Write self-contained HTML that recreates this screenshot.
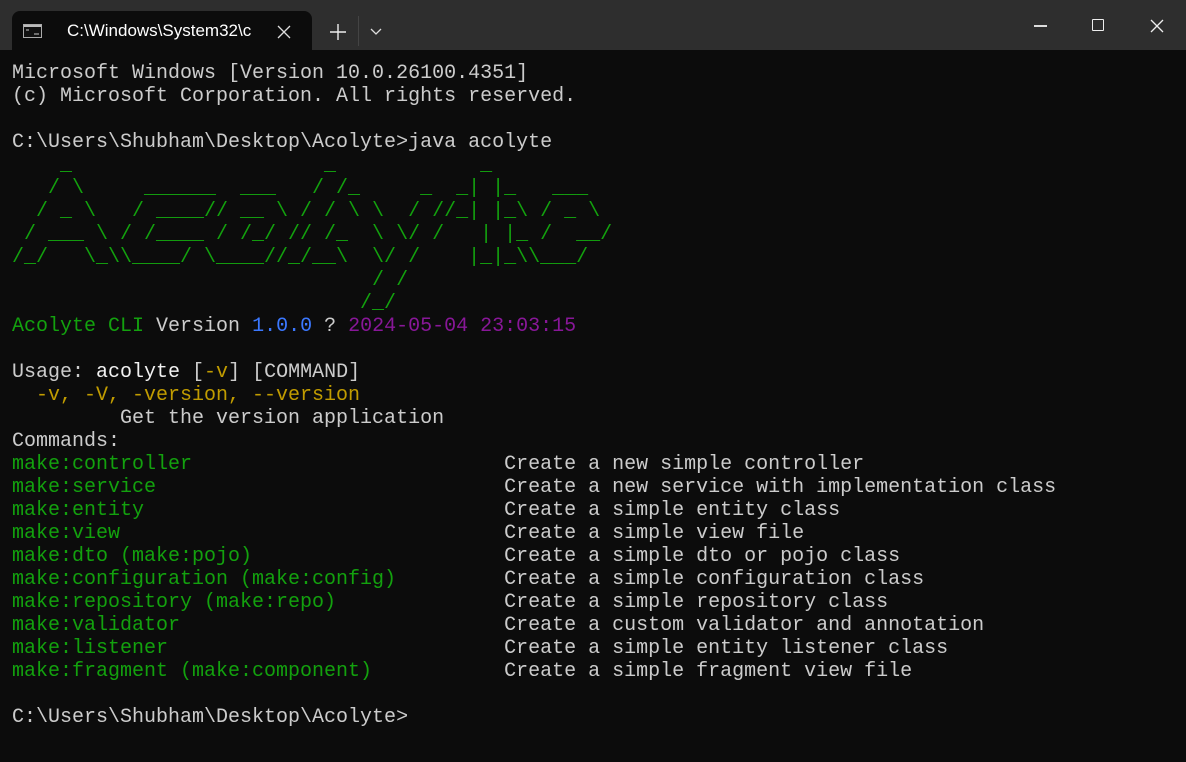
<!DOCTYPE html>
<html><head><meta charset="utf-8"><style>
html,body{margin:0;padding:0;width:1186px;height:762px;overflow:hidden;background:#0c0c0c;}
.bar{position:absolute;left:0;top:0;width:1186px;height:50px;background:#2e2e2e;}
.tab{position:absolute;left:12px;top:11px;width:300px;height:39px;background:#0c0c0c;border-radius:8px 8px 0 0;}
.tt{position:absolute;left:55px;top:10px;font:17px "Liberation Sans",sans-serif;color:#fff;}
pre{position:absolute;left:12px;top:62px;margin:0;font:20px/23px "Liberation Mono",monospace;color:#cccccc;white-space:pre;}
.g{color:#13a10e}.y{color:#c19c00}.b{color:#3b78ff}.p{color:#881798}.w{color:#f2f2f2}
</style></head><body>
<div class="bar"></div>
<div class="tab">
<svg style="position:absolute;left:11px;top:13px" width="20" height="14"><rect x="0.5" y="0.5" width="18" height="13" fill="#111" stroke="#aaa"/><rect x="1" y="1" width="17" height="2" fill="#bbb"/><path d="M3 6h3M11 10h5" stroke="#ccc"/></svg>
<div class="tt">C:\Windows\System32\c</div>
<svg style="position:absolute;left:265px;top:14px" width="14" height="14"><path d="M1 1L13 13M13 1L1 13" stroke="#ddd" stroke-width="1.3"/></svg>
</div>
<svg style="position:absolute;left:330px;top:24px" width="16" height="16"><path d="M0 8H16M8 0V16" stroke="#eee" stroke-width="1.4"/></svg>
<div style="position:absolute;left:358px;top:16px;width:1px;height:30px;background:#444"></div>
<svg style="position:absolute;left:370px;top:28px" width="12" height="8"><path d="M1 1L6 6L11 1" stroke="#ddd" stroke-width="1.3" fill="none"/></svg>
<div style="position:absolute;left:1034px;top:25px;width:13px;height:1.5px;background:#ddd"></div>
<div style="position:absolute;left:1092px;top:19px;width:10px;height:10px;border:1.3px solid #eee;border-radius:1px"></div>
<svg style="position:absolute;left:1150px;top:19px" width="14" height="14"><path d="M1 1L13 13M13 1L1 13" stroke="#eee" stroke-width="1.3"/></svg>
<pre>Microsoft Windows [Version 10.0.26100.4351]
(c) Microsoft Corporation. All rights reserved.

C:\Users\Shubham\Desktop\Acolyte&gt;java acolyte
<span class="g">    _                     _            _
   / \     ______  ___   / /_     _  _| |_   ___
  / _ \   / ____// __ \ / / \ \  / //_| |_\ / _ \
 / ___ \ / /____ / /_/ // /_  \ \/ /   | |_ /  __/
/_/   \_\\____/ \____//_/__\  \/ /    |_|_\\___/
                              / /
                             /_/</span>
<span class="g">Acolyte CLI</span> Version <span class="b">1.0.0</span> ? <span class="p">2024-05-04 23:03:15</span>

Usage: <span class="w">acolyte</span> [<span class="y">-v</span>] [COMMAND]
<span class="y">  -v, -V, -version, --version</span>
         Get the version application
Commands:
<span class="g">make:controller</span>                          Create a new simple controller
<span class="g">make:service</span>                             Create a new service with implementation class
<span class="g">make:entity</span>                              Create a simple entity class
<span class="g">make:view</span>                                Create a simple view file
<span class="g">make:dto (make:pojo)</span>                     Create a simple dto or pojo class
<span class="g">make:configuration (make:config)</span>         Create a simple configuration class
<span class="g">make:repository (make:repo)</span>              Create a simple repository class
<span class="g">make:validator</span>                           Create a custom validator and annotation
<span class="g">make:listener</span>                            Create a simple entity listener class
<span class="g">make:fragment (make:component)</span>           Create a simple fragment view file

C:\Users\Shubham\Desktop\Acolyte&gt;</pre>
</body></html>
